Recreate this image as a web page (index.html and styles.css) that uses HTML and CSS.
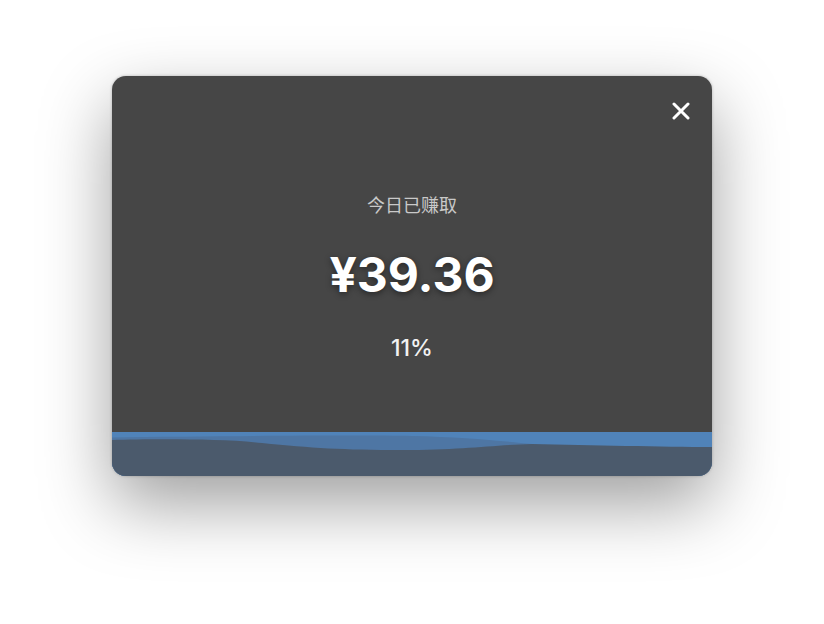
FILE: index.html
```html
<!DOCTYPE html>
<html lang="zh-CN">
<head>
  <meta charset="UTF-8">
  <meta name="viewport" content="width=device-width, initial-scale=1.0">
  <title>今日已赚取</title>
  <link rel="stylesheet" href="styles.css">
</head>
<body>

  <div class="card">
    <button class="close" aria-label="关闭">
      <svg width="18" height="18" viewBox="0 0 18 18">
        <path d="M2 2 L16 16 M16 2 L2 16" stroke="#fff" stroke-width="3" stroke-linecap="round"/>
      </svg>
    </button>

    <div class="label">今日已赚取</div>
    <div class="amount">¥39.36</div>
    <div class="percent">11%</div>

    <!-- progress wave -->
    <svg class="wave" viewBox="0 0 600 44" preserveAspectRatio="none">
      <rect x="0" y="0" width="600" height="44" fill="#5083b9"/>
      <path d="M0 5.5 C100 4 250 3 300 4 C350 5 390 9 420 12 L420 44 L0 44 Z" fill="#4e76a4"/>
      <path d="M0 8 C40 7 110 6.5 150 11 C200 16 230 18 290 18 C350 18 380 13 420 12 C480 13 550 15 600 15 L600 44 L0 44 Z" fill="#4b5a6c"/>
    </svg>
  </div>

</body>
</html>
```

FILE: styles.css
```css
html {
  background-color: #fff;
}

body {
  margin: 0;
  min-height: 624px;
  box-sizing: border-box;
  padding-top: 76px;
  font-family: Inter, "Noto Sans CJK SC", sans-serif;
  display: flex;
  justify-content: center;
  align-items: flex-start;
}

.card {
  position: relative;
  width: 600px;
  height: 400px;
  background-color: #464646;
  border-radius: 14px;
  overflow: hidden;
  display: flex;
  flex-direction: column;
  align-items: center;
  box-shadow: 0 28px 70px rgba(0, 0, 0, 0.38), 0 0 3px rgba(0, 0, 0, 0.25);
}

.close {
  position: absolute;
  top: 26px;
  right: 22px;
  width: 18px;
  height: 18px;
  padding: 0;
  border: none;
  background: none;
  cursor: pointer;
  display: flex;
}

.label {
  margin-top: 118px;
  font-size: 18px;
  line-height: 24px;
  color: #c9c9c9;
}

.amount {
  margin-top: 29px;
  font-size: 48px;
  line-height: 56px;
  font-weight: 700;
  color: #fff;
  text-shadow: 0 2px 6px rgba(0, 0, 0, 0.45);
}

.percent {
  margin-top: 31px;
  font-size: 23px;
  line-height: 28px;
  font-weight: 500;
  color: #f2f2f2;
}

.wave {
  margin-top: auto;
  display: block;
  width: 600px;
  height: 44px;
}
```
